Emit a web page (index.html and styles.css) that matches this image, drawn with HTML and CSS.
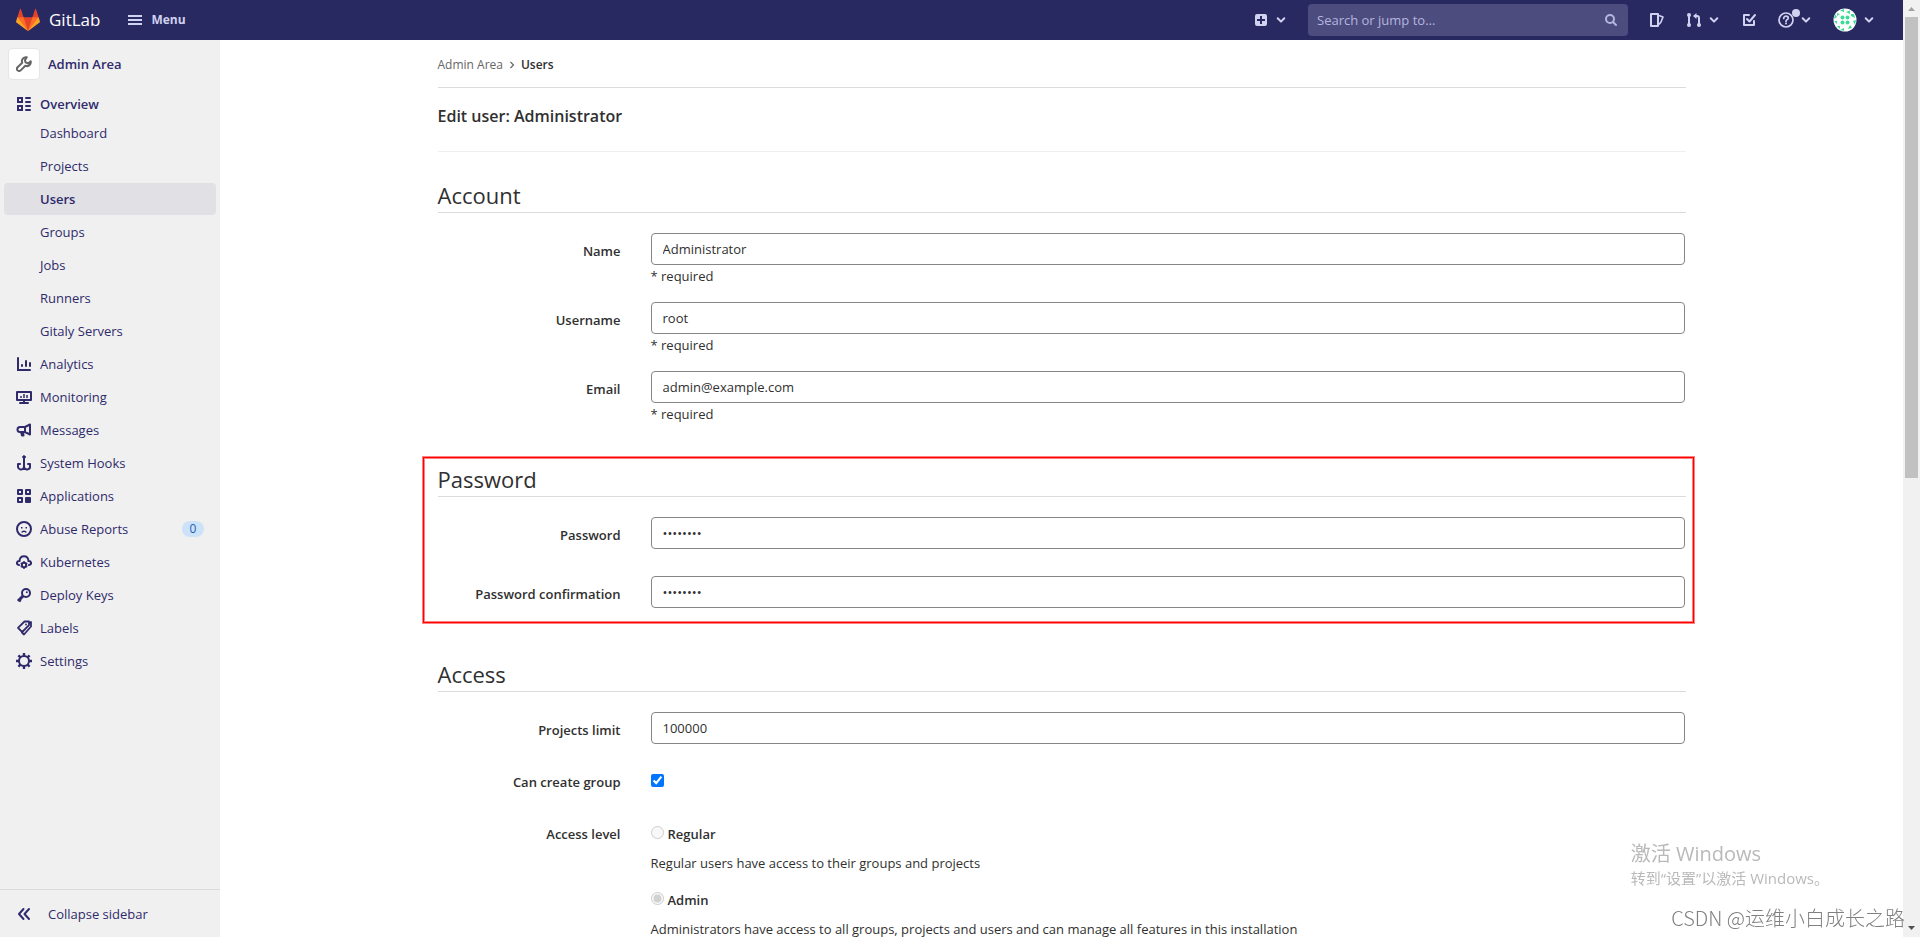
FILE: index.html
```html
<!DOCTYPE html>
<html lang="en">
<head>
  <meta charset="UTF-8" />
  <meta name="viewport" content="width=device-width, initial-scale=1.0" />
  <title>Edit · Administrator · Users · GitLab</title>
  <link rel="stylesheet" href="styles.css">
</head>
<body>
  <svg class="defs" aria-hidden="true">
    <symbol id="chevron" viewBox="0 0 12 12"><path d="M2.7 4.3 6 7.6l3.3-3.3" fill="none" stroke="currentColor" stroke-width="2" stroke-linecap="round" stroke-linejoin="round"/></symbol>
  </svg>

  <header class="navbar">
    <a class="brand" href="#">
      <svg width="24" height="24" viewBox="0 0 36 36">
        <path fill="#e24329" d="M2 14l9.38 9v-9l-4-12.28c-.205-.632-1.176-.632-1.38 0z"/>
        <path fill="#e24329" d="M34 14l-9.38 9v-9l4-12.28c.205-.632 1.176-.632 1.38 0z"/>
        <path fill="#e24329" d="M18 34.38L3 14h30z"/>
        <path fill="#fc6d26" d="M18 34.38L11.38 14H2l4 11z"/>
        <path fill="#fc6d26" d="M18 34.38L24.62 14H34l-4 11z"/>
        <path fill="#fca326" d="M2 14L.1 20.16c-.18.565 0 1.2.5 1.56l17.42 12.66z"/>
        <path fill="#fca326" d="M34 14l1.9 6.16c.18.565 0 1.2-.5 1.56L18 34.38z"/>
      </svg>
      <span>GitLab</span>
    </a>
    <button class="menu-btn" type="button">
      <svg width="16" height="16" viewBox="0 0 16 16" fill="none" stroke="currentColor" stroke-width="2"><path d="M1 4h14M1 8h14M1 12h14"/></svg>
      Menu
    </button>

    <div class="nav-right">
      <button class="nav-btn" type="button" aria-label="Create new">
        <svg width="16" height="16" viewBox="0 0 16 16"><path fill="currentColor" fill-rule="evenodd" d="M4 2a2 2 0 0 0-2 2v8a2 2 0 0 0 2 2h8a2 2 0 0 0 2-2V4a2 2 0 0 0-2-2zm3 2h2v3h3v2H9v3H7V9H4V7h3z"/></svg>
        <svg width="12" height="12"><use href="#chevron"/></svg>
      </button>
      <form class="search">
        <input type="search" placeholder="Search or jump to…" aria-label="Search">
        <svg width="16" height="16" viewBox="0 0 16 16" fill="none" stroke="currentColor" stroke-width="2" stroke-linecap="round"><circle cx="7" cy="7" r="4"/><path d="M10.2 10.2 13 13"/></svg>
      </form>
      <a class="nav-btn" href="#" aria-label="Issues">
        <svg width="16" height="16" viewBox="0 0 16 16" fill="none" stroke="currentColor" stroke-width="2" stroke-linejoin="round"><path d="M2 2h7v12H2z"/><path d="M10 3.5 14 5l-2 5-2 2.5" stroke-width="1.6"/></svg>
      </a>
      <button class="nav-btn" type="button" aria-label="Merge requests">
        <svg width="16" height="16" viewBox="0 0 16 16" fill="none" stroke="currentColor" stroke-width="2"><path d="M3 3v10M8 4h3a2 2 0 0 1 2 2v7"/><path d="M10.5 1v6L7 4z" fill="currentColor" stroke="none"/><g fill="currentColor" stroke="none"><circle cx="3" cy="3" r="2"/><circle cx="3" cy="13" r="2"/><circle cx="13" cy="13" r="2"/></g></svg>
        <svg width="12" height="12"><use href="#chevron"/></svg>
      </button>
      <a class="nav-btn" href="#" aria-label="To-Do List">
        <svg width="16" height="16" viewBox="0 0 16 16" fill="none" stroke="currentColor" stroke-width="2" stroke-linecap="round" stroke-linejoin="round"><path d="M8 3H3v10h10V9"/><path d="M6 7l2.5 2.5L14 3"/></svg>
      </a>
      <button class="nav-btn help" type="button" aria-label="Help">
        <svg width="16" height="16" viewBox="0 0 16 16" fill="none" stroke="currentColor" stroke-width="1.7"><circle cx="8" cy="8" r="7"/><path d="M5.7 6.5C5.7 5 6.700 4.200 8 4.200s2.300.8 2.300 2S8 7.600 8 9.500" stroke-linecap="round"/><circle cx="8" cy="11.6" r="1" fill="currentColor" stroke="none"/></svg>
        <svg width="12" height="12"><use href="#chevron"/></svg>
        <span class="dot"></span>
      </button>
      <button class="nav-btn" type="button" aria-label="Account menu">
        <svg width="24" height="24" viewBox="0 0 24 24">
          <circle cx="12" cy="12" r="11.5" fill="#fff"/>
          <g fill="#3fd998"><circle cx="9.5" cy="9.5" r="2"/><circle cx="14.5" cy="9.5" r="2"/><circle cx="9.5" cy="14.5" r="2"/><circle cx="14.5" cy="14.5" r="2"/>
          <path d="M7 2.500 11 1v3zM13 4l4-1.500V6zM18 6h3l1 4-4-2zM20 13l3-1-1 5zM17 17l2 3-4 1zM11 20v3l-4-1zM7 18v3l-3-3zM4 16l-3-3h3zM1 11l1-5 2 3zM4 5l3 1-3 2z"/></g>
        </svg>
        <svg width="12" height="12"><use href="#chevron"/></svg>
      </button>
    </div>
  </header>

  <aside class="sidebar">
    <a class="context" href="#">
      <span class="context-icon">
        <svg width="16" height="16" viewBox="0 0 16 16" fill="none" stroke="currentColor" stroke-width="2" stroke-linejoin="round"><path d="M10.8 1.300a4 4 0 0 0-4.600 5.400L1.600 11.300a2.150 2.150 0 0 0 3.100 3.100L9.300 9.800a4 4 0 0 0 5.400-4.600l-2.500 2.300-2.600-1.100-.7-2.300z"/></svg>
      </span>
      Admin Area
    </a>

    <nav>
      <a class="item current" href="#">
        <svg width="16" height="16" viewBox="0 0 16 16" fill="none" stroke="currentColor" stroke-width="2"><path d="M2 2h4v4H2zM2 10h4v4H2z"/><path d="M10 2h4M10 6h4M10 10h4M10 14h4" stroke-linecap="round"/></svg>
        Overview
      </a>
      <div class="sub">
        <a class="item" href="#">Dashboard</a>
        <a class="item" href="#">Projects</a>
        <a class="item active" href="#">Users</a>
        <a class="item" href="#">Groups</a>
        <a class="item" href="#">Jobs</a>
        <a class="item" href="#">Runners</a>
        <a class="item" href="#">Gitaly Servers</a>
      </div>
      <a class="item" href="#">
        <svg width="16" height="16" viewBox="0 0 16 16" fill="none" stroke="currentColor" stroke-width="2" stroke-linecap="round"><path d="M2 2v12h12"/><path d="M6 9v1M10 5v5M14 7v3"/></svg>
        Analytics
      </a>
      <a class="item" href="#">
        <svg width="16" height="16" viewBox="0 0 16 16" fill="none" stroke="currentColor" stroke-width="2"><path d="M1 3h14v8H1z" stroke-linejoin="round"/><path d="M8 11v3M4 14h8" stroke-linecap="round"/><path d="M5 7v2M8 5v4M11 6v3" stroke-width="1.5"/></svg>
        Monitoring
      </a>
      <a class="item" href="#">
        <svg width="16" height="16" viewBox="0 0 16 16" fill="none" stroke="currentColor" stroke-width="2" stroke-linejoin="round"><path d="M9 5 14 2.500v10L9 10H4a2.500 2.500 0 0 1 0-5zM9 5v5M5 10l1 3.500h1.500L7 10"/></svg>
        Messages
      </a>
      <a class="item" href="#">
        <svg width="16" height="16" viewBox="0 0 16 16" fill="none" stroke="currentColor" stroke-width="2" stroke-linecap="round" stroke-linejoin="round"><circle cx="8" cy="2" r="1.3" fill="currentColor" stroke-width="1"/><path d="M8 3v11M2 9v2a3 3 0 0 0 6 1 3 3 0 0 0 6-1V9M2 9h2M12 9h2"/></svg>
        System Hooks
      </a>
      <a class="item" href="#">
        <svg width="16" height="16" viewBox="0 0 16 16" fill="none" stroke="currentColor" stroke-width="2" stroke-linejoin="round"><path d="M2 2h4v4H2zM10 2h4v4h-4zM2 10h4v4H2z"/><path d="M10 10h4v4h-4z" fill="currentColor"/></svg>
        Applications
      </a>
      <a class="item" href="#">
        <svg width="16" height="16" viewBox="0 0 16 16" fill="none" stroke="currentColor" stroke-width="2"><circle cx="8" cy="8" r="7"/><path d="M5.8 11.500c.5-1.700 3.900-1.700 4.400 0" stroke-width="1.5"/><path d="M5 6.800h1.500M9.500 6.800H11" stroke-width="1.6"/></svg>
        Abuse Reports
        <span class="badge">0</span>
      </a>
      <a class="item" href="#">
        <svg width="16" height="16" viewBox="0 0 16 16" fill="none" stroke="currentColor" stroke-width="2"><path d="M3 11C0 10.500.3 7 3.500 7 4 .8 12 .8 12.500 7c3.200 0 3.500 3.500.5 4" stroke-linecap="round"/><circle cx="8" cy="11" r="2.200"/><path d="M8 7v2M8 13v2M4.700 9.200l1.600.9M9.700 11.900l1.600.9M11.300 9.200l-1.600.9M6.300 11.900l-1.600.9" stroke-width="1.4"/></svg>
        Kubernetes
      </a>
      <a class="item" href="#">
        <svg width="16" height="16" viewBox="0 0 16 16" fill="none" stroke="currentColor" stroke-width="2"><circle cx="10" cy="6" r="4"/><path d="M7 9l-5 5M3 13l2 1" stroke-width="3"/><circle cx="10.8" cy="5.2" r="1" fill="currentColor" stroke="none"/></svg>
        Deploy Keys
      </a>
      <a class="item" href="#">
        <svg width="16" height="16" viewBox="0 0 16 16" fill="none" stroke="currentColor" stroke-width="1.8" stroke-linejoin="round"><path d="M8.5 1.500H13v3.700L6.200 12 2 7.800z"/><path d="M13 3.500 15 2v4.500L8 14.500 5.500 12"/><circle cx="10" cy="4.5" r=".9" fill="currentColor" stroke="none"/></svg>
        Labels
      </a>
      <a class="item" href="#">
        <svg width="16" height="16" viewBox="0 0 16 16" fill="none" stroke="currentColor" stroke-width="2"><circle cx="8" cy="8" r="5"/><path d="M8 0v3M8 13v3M0 8h3M13 8h3M2.400 2.400l2 2M11.600 11.600l2 2M2.400 13.600l2-2M11.600 4.400l2-2" stroke-width="2.4"/></svg>
        Settings
      </a>
    </nav>

    <button class="collapse" type="button">
      <svg width="16" height="16" viewBox="0 0 16 16" fill="none" stroke="currentColor" stroke-width="2" stroke-linecap="round" stroke-linejoin="round"><path d="M7.500 3 3 8l4.500 5M13 3 8.500 8l4.500 5"/></svg>
      Collapse sidebar
    </button>
  </aside>

  <main>
    <div class="container">
      <nav class="breadcrumbs" aria-label="Breadcrumbs">
        <a href="#">Admin Area</a>
        <svg width="8" height="8" viewBox="0 0 8 8" fill="none" stroke="currentColor" stroke-width="1.2"><path d="M2.5 1 5.500 4l-3 3"/></svg>
        <a class="here" href="#">Users</a>
      </nav>

      <h1>Edit user: Administrator</h1>
      <hr>

      <form>
        <section>
          <h2>Account</h2>
          <div class="row">
            <label for="name">Name</label>
            <div>
              <input class="field" id="name" type="text" value="Administrator">
              <span class="help-text">* required</span>
            </div>
          </div>
          <div class="row">
            <label for="username">Username</label>
            <div>
              <input class="field" id="username" type="text" value="root">
              <span class="help-text">* required</span>
            </div>
          </div>
          <div class="row">
            <label for="email">Email</label>
            <div>
              <input class="field" id="email" type="text" value="admin@example.com">
              <span class="help-text">* required</span>
            </div>
          </div>
        </section>

        <section class="marked">
          <h2>Password</h2>
          <div class="row tall">
            <label for="password">Password</label>
            <input class="field" id="password" type="password" value="password">
          </div>
          <div class="row tall">
            <label for="confirmation">Password confirmation</label>
            <input class="field" id="confirmation" type="password" value="password">
          </div>
        </section>

        <section>
          <h2>Access</h2>
          <div class="row">
            <label for="limit">Projects limit</label>
            <input class="field" id="limit" type="text" value="100000">
          </div>
          <div class="row">
            <label for="create-group">Can create group</label>
            <div class="choice"><input id="create-group" type="checkbox" checked></div>
          </div>
          <div class="row" role="radiogroup" aria-labelledby="level">
            <span class="label" id="level">Access level</span>
            <div>
              <div class="choice">
                <input id="regular" name="level" type="radio" disabled>
                <label for="regular">Regular</label>
              </div>
              <p>Regular users have access to their groups and projects</p>
              <div class="choice">
                <input id="admin" name="level" type="radio" checked disabled>
                <label for="admin">Admin</label>
              </div>
              <p>Administrators have access to all groups, projects and users and can manage all features in this installation</p>
            </div>
          </div>
        </section>
      </form>
    </div>
  </main>

  <div class="scrollbar" aria-hidden="true">
    <svg width="17" height="17" viewBox="0 0 17 17"><path d="M5 11h7L8.500 7z" fill="#a3a3a3"/></svg>
    <div class="track"><div class="thumb"></div></div>
    <svg width="17" height="17" viewBox="0 0 17 17"><path d="M5 6h7l-3.500 4z" fill="#505050"/></svg>
  </div>

  <div class="activate" lang="zh-CN">
    <strong>激活 Windows</strong>
    <span>转到“设置”以激活 Windows。</span>
  </div>
  <div class="watermark" lang="zh-CN">CSDN @运维小白成长之路</div>
</body>
</html>
```

FILE: styles.css
```css
:root {
  --nav: #292961;
  --nav-text: #d1d1f0;
  --side-text: #2f2a6b;
  --text: #303030;
  --line: #dbdbdb;
}

* {
  box-sizing: border-box;
}

body {
  margin: 0;
  height: 100vh;
  overflow: hidden;
  display: grid;
  grid-template: 40px 1fr / 220px 1fr 17px;
  font-family: "Open Sans", "Noto Sans CJK SC", sans-serif;
  font-size: 13px;
  line-height: 20px;
  color: var(--text);
  background: #fff;
}

a {
  color: inherit;
  text-decoration: none;
}

button,
input {
  font: inherit;
  color: inherit;
}

button {
  padding: 0;
  border: none;
  background: none;
  cursor: pointer;
}

svg {
  flex: none;
}

.defs {
  display: none;
}

/* top bar */

.navbar {
  grid-column: 1 / 3;
  display: flex;
  align-items: center;
  padding: 0 28px 0 16px;
  background: var(--nav);
  color: var(--nav-text);
}

.brand {
  display: flex;
  align-items: center;
  gap: 9px;
  color: #fff;
  font-size: 17px;
}

.menu-btn {
  display: flex;
  align-items: center;
  gap: 8px;
  margin-left: 27px;
  font-size: 12px;
  font-weight: 700;
}

.nav-right {
  display: flex;
  align-items: center;
  gap: 21px;
  margin-left: auto;
}

.nav-btn {
  display: flex;
  align-items: center;
  gap: 6px;
}

.help {
  position: relative;
}

.dot {
  position: absolute;
  top: -3px;
  left: 14px;
  width: 8px;
  height: 8px;
  border-radius: 50%;
  background: var(--nav-text);
}

.search {
  display: flex;
  align-items: center;
  width: 320px;
  height: 32px;
  padding: 0 9px;
  border-radius: 4px;
  background: #4c4c7e;
  color: #b5b5de;
}

.search input {
  flex: 1;
  min-width: 0;
  padding: 0;
  border: none;
  outline: none;
  background: none;
}

.search input::placeholder {
  color: #b5b5de;
}

/* sidebar */

.sidebar {
  display: flex;
  flex-direction: column;
  background: #f0f0f0;
  color: var(--side-text);
}

.context {
  display: flex;
  align-items: center;
  gap: 9px;
  padding: 9px 9px 8px;
  font-weight: 600;
}

.context-icon {
  display: flex;
  align-items: center;
  justify-content: center;
  width: 30px;
  height: 30px;
  border-radius: 4px;
  background: #fff;
  box-shadow: 0 0 0 1px #e6e6e6;
  color: #666;
}

.item {
  display: flex;
  align-items: center;
  gap: 8px;
  height: 32px;
  margin: 0 4px 1px;
  padding: 0 12px;
  border-radius: 4px;
}

.current {
  height: 29px;
  padding-top: 4px;
  font-weight: 600;
}

.sub .item {
  padding-left: 36px;
}

.active {
  background: #e0e0e5;
  font-weight: 600;
}

.badge {
  margin-left: auto;
  width: 22px;
  border-radius: 8px;
  background: #cbe2f9;
  color: #1f5fb0;
  font-size: 12px;
  line-height: 16px;
  text-align: center;
}

.collapse {
  display: flex;
  align-items: center;
  gap: 16px;
  height: 48px;
  margin-top: auto;
  padding: 0 16px;
  border-top: 1px solid var(--line);
}

/* page */

main {
  min-width: 0;
  overflow: hidden;
}

.container {
  max-width: 1280px;
  margin: 0 auto;
  padding: 0 16px;
}

.breadcrumbs {
  display: flex;
  align-items: center;
  gap: 5px;
  height: 48px;
  padding-top: 2px;
  border-bottom: 1px solid var(--line);
  font-size: 12px;
  color: #666;
}

.here {
  font-weight: 600;
  color: var(--text);
}

h1 {
  margin: 16px 0 23px;
  font-size: 16px;
  font-weight: 600;
  line-height: 24px;
}

hr {
  margin: 0 0 4px;
  border: none;
  border-top: 1px solid #eee;
}

section {
  display: flow-root;
  position: relative;
}

h2 {
  margin: 0 0 20px;
  padding: 23px 0 1px;
  border-bottom: 1px solid var(--line);
  font-size: 22px;
  font-weight: 400;
  line-height: 32px;
}

/* red frame round the password fields */
.marked::before {
  content: "";
  position: absolute;
  inset: 17px -8px 12px -15px;
  border: 1px solid #f00;
  box-shadow: 0 0 0 1px #ff8080, inset 0 0 0 1px #ff8080;
  pointer-events: none;
}

.row {
  display: grid;
  grid-template-columns: 183px 1fr;
  align-items: start;
  column-gap: 30px;
  min-height: 36px;
  margin-bottom: 16px;
  padding-right: 1px;
}

.tall {
  min-height: 43px;
}

.row > label,
.label {
  padding-top: 8px;
  font-weight: 600;
  text-align: right;
}

.field {
  display: block;
  width: 100%;
  height: 32px;
  padding: 0 11px;
  border: 1px solid #868686;
  border-radius: 4px;
  background: #fff;
}

.help-text {
  display: block;
  padding-top: 1px;
}

.choice {
  display: flex;
  align-items: center;
  gap: 4px;
  padding-top: 8px;
  font-weight: 600;
}

.choice input {
  width: 13px;
  height: 13px;
  margin: 2px 0 5px;
}

.row p {
  margin: 9px 0;
}

/* scrollbar */

.scrollbar {
  grid-area: 1 / 3 / 3 / 4;
  display: flex;
  flex-direction: column;
  background: #f1f1f1;
}

.track {
  flex: 1;
  padding: 0 2px;
}

.thumb {
  height: 51%;
  background: #c1c1c1;
}

/* overlaid notices */

.activate,
.watermark {
  position: fixed;
  white-space: nowrap;
  pointer-events: none;
}

.activate {
  right: 91px;
  bottom: 47px;
  color: #b9b9b9;
}

.activate strong,
.activate span {
  display: block;
  font-size: 15px;
  font-weight: 400;
  line-height: 24px;
}

.activate strong {
  font-size: 20px;
}

.watermark {
  right: 15px;
  bottom: 5px;
  color: #808080;
  font-family: "Noto Sans CJK SC", sans-serif;
  font-size: 20px;
  font-weight: 300;
  line-height: 28px;
}
```
